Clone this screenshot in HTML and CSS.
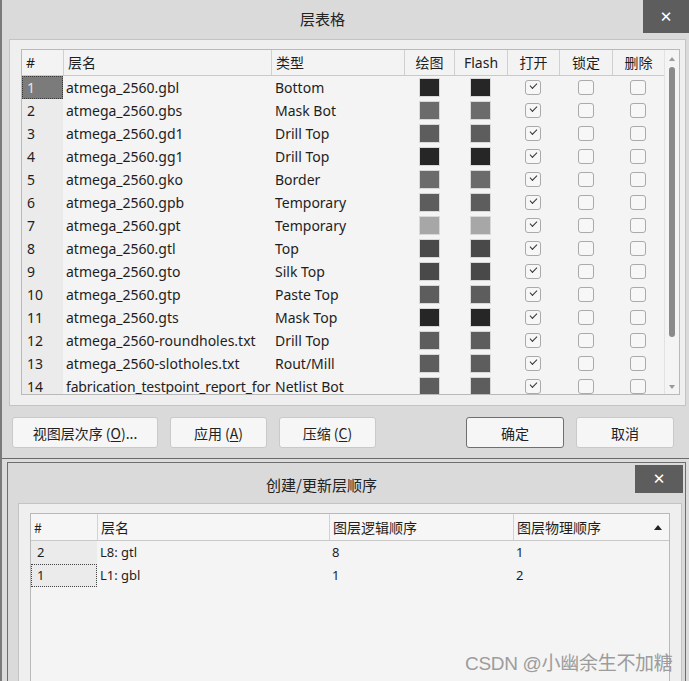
FILE: index.html
```html
<!DOCTYPE html>
<html>
<head>
<meta charset="utf-8">
<link rel="stylesheet" href="styles.css">
</head>
<body>
<div class="dlg1">
  <div class="titlebar1">
    <div class="title">层表格</div>
    <div class="close close1">✕</div>
  </div>
  <div class="panel1">
    <div class="table1">
      <div class="grid1">
        <div class="head1">
          <div class="hc left">#</div>
          <div class="hc left sep">层名</div>
          <div class="hc left sep">类型</div>
          <div class="hc center sep">绘图</div>
          <div class="hc center sep">Flash</div>
          <div class="hc center sep">打开</div>
          <div class="hc center sep">锁定</div>
          <div class="hc center sep">删除</div>
        </div>
        <div class="body1">
          <div class="row1"><div class="num sel">1</div><div class="nm">atmega_2560.gbl</div><div class="ty">Bottom</div><div class="sw"><span class="c1"></span></div><div class="sw"><span class="c1"></span></div><div class="cb"><span class="box on"></span></div><div class="cb"><span class="box"></span></div><div class="cb"><span class="box"></span></div></div>
          <div class="row1"><div class="num">2</div><div class="nm">atmega_2560.gbs</div><div class="ty">Mask Bot</div><div class="sw"><span class="c2"></span></div><div class="sw"><span class="c2"></span></div><div class="cb"><span class="box on"></span></div><div class="cb"><span class="box"></span></div><div class="cb"><span class="box"></span></div></div>
          <div class="row1"><div class="num">3</div><div class="nm">atmega_2560.gd1</div><div class="ty">Drill Top</div><div class="sw"><span class="c3"></span></div><div class="sw"><span class="c3"></span></div><div class="cb"><span class="box on"></span></div><div class="cb"><span class="box"></span></div><div class="cb"><span class="box"></span></div></div>
          <div class="row1"><div class="num">4</div><div class="nm">atmega_2560.gg1</div><div class="ty">Drill Top</div><div class="sw"><span class="c1"></span></div><div class="sw"><span class="c1"></span></div><div class="cb"><span class="box on"></span></div><div class="cb"><span class="box"></span></div><div class="cb"><span class="box"></span></div></div>
          <div class="row1"><div class="num">5</div><div class="nm">atmega_2560.gko</div><div class="ty">Border</div><div class="sw"><span class="c2"></span></div><div class="sw"><span class="c2"></span></div><div class="cb"><span class="box on"></span></div><div class="cb"><span class="box"></span></div><div class="cb"><span class="box"></span></div></div>
          <div class="row1"><div class="num">6</div><div class="nm">atmega_2560.gpb</div><div class="ty">Temporary</div><div class="sw"><span class="c3"></span></div><div class="sw"><span class="c3"></span></div><div class="cb"><span class="box on"></span></div><div class="cb"><span class="box"></span></div><div class="cb"><span class="box"></span></div></div>
          <div class="row1"><div class="num">7</div><div class="nm">atmega_2560.gpt</div><div class="ty">Temporary</div><div class="sw"><span class="c4"></span></div><div class="sw"><span class="c4"></span></div><div class="cb"><span class="box on"></span></div><div class="cb"><span class="box"></span></div><div class="cb"><span class="box"></span></div></div>
          <div class="row1"><div class="num">8</div><div class="nm">atmega_2560.gtl</div><div class="ty">Top</div><div class="sw"><span class="c5"></span></div><div class="sw"><span class="c5"></span></div><div class="cb"><span class="box on"></span></div><div class="cb"><span class="box"></span></div><div class="cb"><span class="box"></span></div></div>
          <div class="row1"><div class="num">9</div><div class="nm">atmega_2560.gto</div><div class="ty">Silk Top</div><div class="sw"><span class="c5"></span></div><div class="sw"><span class="c5"></span></div><div class="cb"><span class="box on"></span></div><div class="cb"><span class="box"></span></div><div class="cb"><span class="box"></span></div></div>
          <div class="row1"><div class="num">10</div><div class="nm">atmega_2560.gtp</div><div class="ty">Paste Top</div><div class="sw"><span class="c3"></span></div><div class="sw"><span class="c3"></span></div><div class="cb"><span class="box on"></span></div><div class="cb"><span class="box"></span></div><div class="cb"><span class="box"></span></div></div>
          <div class="row1"><div class="num">11</div><div class="nm">atmega_2560.gts</div><div class="ty">Mask Top</div><div class="sw"><span class="c1"></span></div><div class="sw"><span class="c1"></span></div><div class="cb"><span class="box on"></span></div><div class="cb"><span class="box"></span></div><div class="cb"><span class="box"></span></div></div>
          <div class="row1"><div class="num">12</div><div class="nm">atmega_2560-roundholes.txt</div><div class="ty">Drill Top</div><div class="sw"><span class="c3"></span></div><div class="sw"><span class="c3"></span></div><div class="cb"><span class="box on"></span></div><div class="cb"><span class="box"></span></div><div class="cb"><span class="box"></span></div></div>
          <div class="row1"><div class="num">13</div><div class="nm">atmega_2560-slotholes.txt</div><div class="ty">Rout/Mill</div><div class="sw"><span class="c3"></span></div><div class="sw"><span class="c3"></span></div><div class="cb"><span class="box on"></span></div><div class="cb"><span class="box"></span></div><div class="cb"><span class="box"></span></div></div>
          <div class="row1"><div class="num">14</div><div class="nm nm14">fabrication_testpoint_report_for</div><div class="ty">Netlist Bot</div><div class="sw"><span class="c3"></span></div><div class="sw"><span class="c3"></span></div><div class="cb"><span class="box on"></span></div><div class="cb"><span class="box"></span></div><div class="cb"><span class="box"></span></div></div>
        </div>
      </div>
      <div class="vscroll">
        <div class="arrow up"></div>
        <div class="thumb"></div>
        <div class="arrow down"></div>
      </div>
    </div>
  </div>
  <div class="buttons1">
    <div class="btn w145">视图层次序 (<u>O</u>)...</div>
    <div class="btn w97">应用 (<u>A</u>)</div>
    <div class="btn w97">压缩 (<u>C</u>)</div>
    <div class="btn w98 ok">确定</div>
    <div class="btn w98">取消</div>
  </div>
</div>

<div class="dlg2">
  <div class="titlebar2">
    <div class="title">创建/更新层顺序</div>
    <div class="close close2">✕</div>
  </div>
  <div class="panel2">
    <div class="table2">
      <div class="head2">
        <div class="hc left">#</div>
        <div class="hc left sep">层名</div>
        <div class="hc left sep">图层逻辑顺序</div>
        <div class="hc left sep sortcol">图层物理顺序<span class="sort"></span></div>
      </div>
      <div class="row2"><div class="num2">2</div><div class="c2t">L8: gtl</div><div class="c2t">8</div><div class="c2t">1</div></div>
      <div class="row2"><div class="num2 focus">1</div><div class="c2t">L1: gbl</div><div class="c2t">1</div><div class="c2t">2</div></div>
    </div>
  </div>
</div>

<div class="watermark">CSDN @小幽余生不加糖</div>
</body>
</html>
```

FILE: styles.css
```css
* { box-sizing: border-box; }
html, body { margin: 0; padding: 0; }
body {
  width: 689px;
  height: 681px;
  overflow: hidden;
  background: #dcdcdc;
  border-left: 2px solid #7a7a7a;
  font-family: "Noto Sans", "Noto Sans CJK SC", sans-serif;
  font-size: 14px;
  color: #1e1e1e;
  position: relative;
}

.dlg1 {
  height: 459px;
  background: #dadada;
  border-bottom: 1px solid #6a6a6a;
}
.titlebar1 {
  display: flex;
  align-items: flex-start;
  height: 39px;
}
.title {
  flex: 1;
  text-align: center;
  font-size: 15px;
  color: #222;
  font-family: "Noto Sans CJK SC", sans-serif;
}
.titlebar1 .title { line-height: 37px; }
.close {
  background: #5d5d5d;
  color: #fff;
  display: flex;
  align-items: center;
  justify-content: center;
  font-size: 15px;
  font-weight: bold;
  font-family: "DejaVu Sans", sans-serif;
}
.close1 { width: 46px; height: 33px; }

.panel1 {
  margin: 0 3px 0 7px;
  height: 367px;
  background: #efefef;
  border: 1px solid #c4c4c4;
  padding: 9px 5px 0 11px;
}
.table1 {
  display: flex;
  height: 346px;
  border: 1px solid #b9b9b9;
  background: #f4f4f4;
  overflow: hidden;
}
.grid1 { width: 642px; }
.head1, .row1 {
  display: grid;
  grid-template-columns: 41px 208px 133px 50px 53px 52px 53px 52px;
}
.head1 {
  height: 26px;
  background: #f3f3f3;
  border-bottom: 1px solid #c9c9c9;
}
.hc {
  font-family: "Noto Sans CJK SC", "Noto Sans", sans-serif;
  font-size: 14px;
  line-height: 25px;
  white-space: nowrap;
  position: relative;
}
.hc.left { padding-left: 4px; }
.hc.center { text-align: center; }
.hc.sep { border-left: 1px solid #d2d2d2; }
.head1 .hc.sep { border-left-color: #d0d0d0; }
.head1 .hc { font-family: "Noto Sans", "Noto Sans CJK SC", sans-serif; }

.body1 { height: 320px; overflow: hidden; }
.row1 { height: 23px; align-items: center; }
.row1 > div { height: 23px; line-height: 23px; white-space: nowrap; overflow: hidden; }
.num { background: #ebebeb; padding-left: 5px; }
.num.sel { background: #7b7b7b; color: #e6e6e6; outline: 1px dotted #3a3a3a; outline-offset: -1px; }
.nm { padding-left: 3px; }
.nm14 { letter-spacing: -0.15px; }
.ty { padding-left: 4px; }
.sw, .cb { display: flex; align-items: center; justify-content: center; }
.sw span { width: 21px; height: 19px; display: block; border: 1px solid #d8d8d8; }
.sw .c1 { background: #262626; }
.sw .c2 { background: #6b6b6b; }
.sw .c3 { background: #5d5d5d; }
.sw .c4 { background: #a7a7a7; }
.sw .c5 { background: #494949; }
.box {
  width: 16px;
  height: 15px;
  border: 1px solid #aaaaaa;
  border-radius: 3px;
  background: #f7f7f7;
  display: block;
  position: relative;
}
.box.on::after {
  content: "";
  position: absolute;
  left: 4px;
  top: 2px;
  width: 6px;
  height: 3px;
  border-left: 1.4px solid #333;
  border-bottom: 1.4px solid #333;
  transform: rotate(-45deg);
}

.vscroll {
  width: 14px;
  display: flex;
  flex-direction: column;
  align-items: center;
  background: #f4f4f4;
  border-left: 1px solid #e2e2e2;
}
.arrow { width: 0; height: 0; border-left: 3px solid transparent; border-right: 3px solid transparent; }
.arrow.up { border-bottom: 4px solid #9a9a9a; margin-top: 7px; }
.arrow.down { border-top: 4px solid #9a9a9a; margin-top: 48px; }
.thumb { width: 6px; height: 270px; background: #8a8a8a; border-radius: 3px; margin-top: 6px; }

.buttons1 {
  display: flex;
  gap: 12px;
  padding: 11px 15px 0 10px;
}
.btn {
  height: 31px;
  background: #f6f6f6;
  border: 1px solid #c9c9c9;
  border-radius: 3px;
  display: flex;
  align-items: center;
  justify-content: center;
  font-family: "Noto Sans CJK SC", sans-serif;
  font-size: 14px;
  color: #222;
}
.btn u { text-underline-offset: 2px; }
.w145 { width: 146px; }
.w97 { width: 97px; }
.w98 { width: 98px; }
.btn.ok { margin-left: auto; border-color: #6f6f6f; }

.dlg2 {
  margin: 3px 3px 0 5px;
  height: 240px;
  background: #dadada;
  border: 1px solid #6e6e6e;
}
.titlebar2 {
  display: flex;
  align-items: flex-start;
  height: 40px;
}
.titlebar2 .title { line-height: 43px; }
.close2 { width: 48px; height: 28px; margin: 2px 2px 0 0; }

.panel2 {
  margin: 0 3px 0 10px;
  height: 200px;
  background: #efefef;
  border: 1px solid #c4c4c4;
  padding: 9px 11px 0 11px;
}
.table2 {
  height: 200px;
  border: 1px solid #b9b9b9;
  background: #f4f4f4;
}
.head2, .row2 {
  display: grid;
  grid-template-columns: 66px 232px 184px 1fr;
}
.head2 {
  height: 27px;
  background: #f6f6f6;
  border-bottom: 1px solid #c9c9c9;
}
.head2 .hc { line-height: 26px; padding-left: 3px; font-size: 14px; }
.sortcol { display: flex; justify-content: space-between; align-items: center; }
.sort {
  width: 0; height: 0;
  border-left: 4px solid transparent;
  border-right: 4px solid transparent;
  border-bottom: 5px solid #222;
  margin-right: 7px;
}
.row2 { height: 23px; }
.row2 > div { line-height: 23px; font-size: 13px; font-family: "Noto Sans", sans-serif; padding-left: 3px; }
.num2 { background: #ebebeb; padding-left: 6px !important; }
.num2.focus { outline: 1px dotted #444; outline-offset: -1px; }

.watermark {
  position: absolute;
  left: 463px;
  top: 648px;
  font-family: "Liberation Sans", "Noto Sans CJK SC", sans-serif;
  font-size: 19px;
  color: #9c9c9c;
  white-space: nowrap;
  letter-spacing: -0.3px;
}
```
